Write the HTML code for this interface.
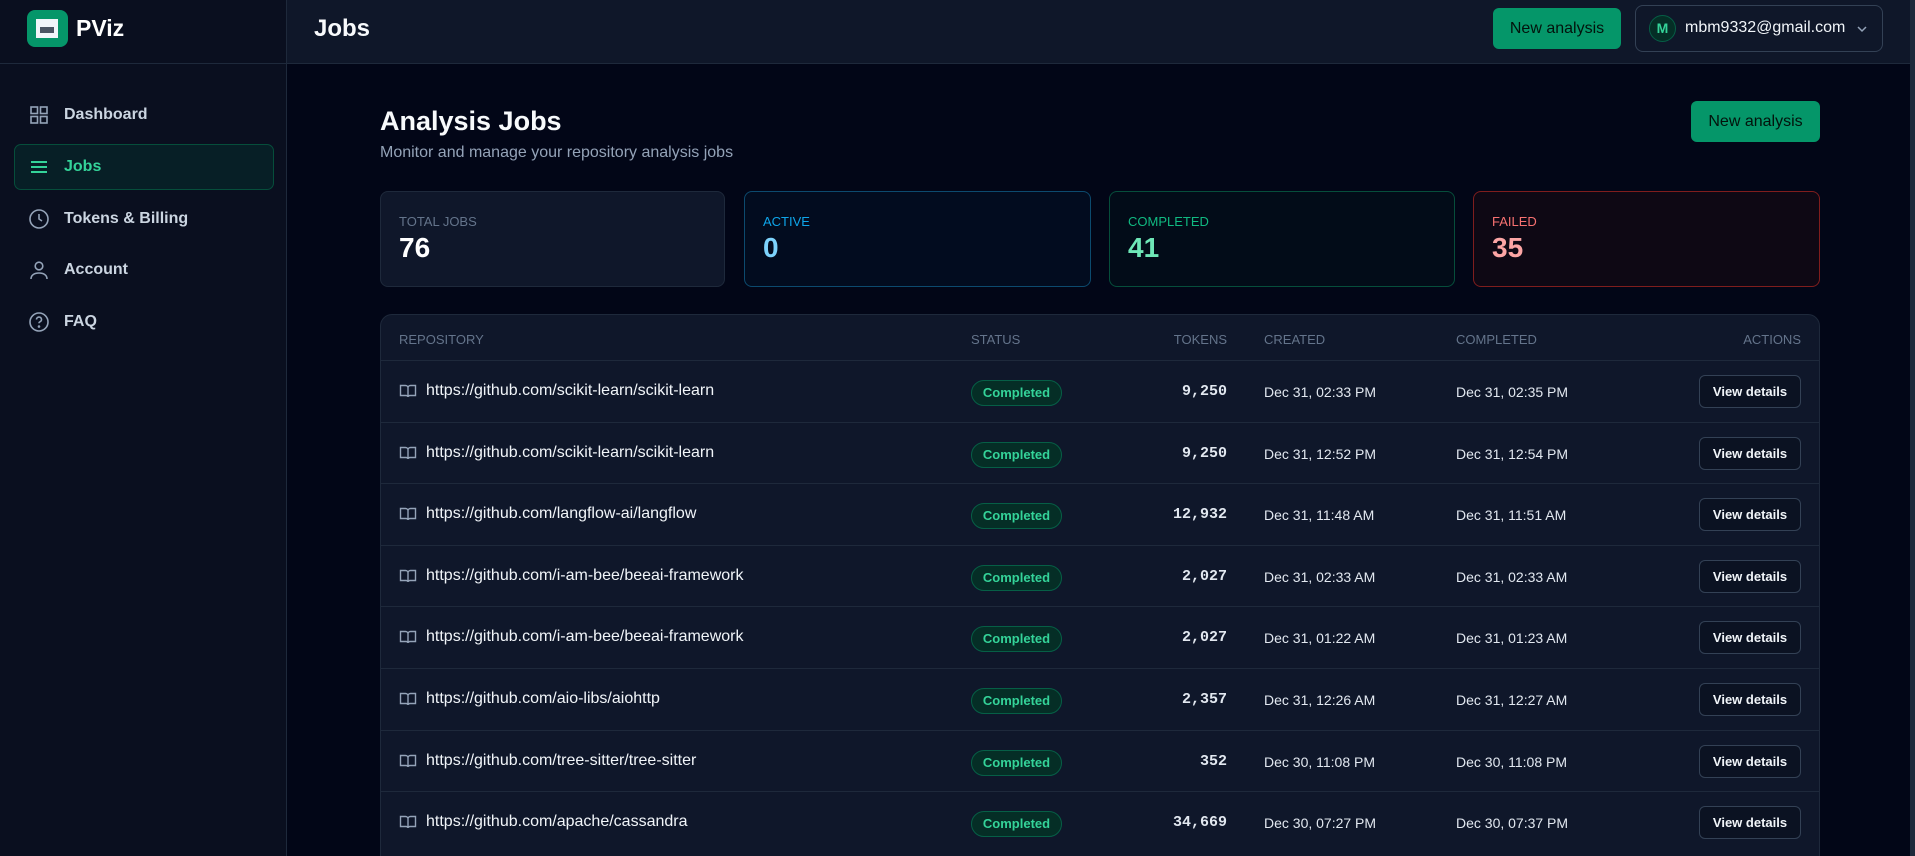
<!DOCTYPE html>
<html style="width:1915px;height:856px;overflow:hidden"><head><meta charset="utf-8"><style>
*{box-sizing:border-box;margin:0;padding:0}
body{width:1915px;height:856px;overflow:hidden;background:#020617;font-family:"Liberation Sans",sans-serif;color:#e2e8f0;position:relative}
.abs{position:absolute}
.side{left:0;top:0;width:287px;height:856px;background:#0a0f1f;border-right:1px solid #1e293b}
.sidehead{left:0;top:0;width:287px;height:64px;border-bottom:1px solid #1e293b}
.head{left:287px;top:0;width:1628px;height:64px;background:#0f1729;border-bottom:1px solid #1e293b}
.nav{position:absolute;left:14px;width:260px;height:46px;display:flex;align-items:center;font-size:16px;font-weight:bold;color:#cbd5e1}
.nav svg{position:absolute;left:14px}
.nav span{position:absolute;left:50px}
.btn{background:#059669;color:#03130c;border-radius:6px;font-size:16px;display:flex;align-items:center;justify-content:center}
.card{position:absolute;top:191px;height:96px;border-radius:8px;border:1px solid}
.card .l{position:absolute;left:18px;top:22px;font-size:13px}
.card .n{position:absolute;left:18px;top:40px;font-size:28px;font-weight:bold}
.table{left:380px;top:314px;width:1440px;height:560px;background:#0f172a;border:1px solid #1e293b;border-radius:12px;overflow:hidden}
.th{position:absolute;top:17px;font-size:13px;color:#64748b}
.row{position:absolute;left:0;width:1438px;height:62px;border-top:1px solid #1e293b}
.row>*{position:absolute}
.url{left:45px;top:21px;font-size:16px;color:#f1f5f9}
.pill{left:590px;top:19px;width:91px;height:26px;border-radius:13px;border:1px solid #065f46;background:#052e26;color:#34d399;font-size:13px;font-weight:bold;text-align:center;line-height:24px}
.tok{right:592px;top:22px;font-family:"Liberation Mono",monospace;font-weight:bold;font-size:15px;color:#e2e8f0}
.d1{left:883px;top:23px;font-size:14px;color:#e2e8f0}
.d2{left:1075px;top:23px;font-size:14px;color:#e2e8f0}
.vd{right:18px;top:14px;width:102px;height:33px;border:1px solid #334155;border-radius:6px;font-size:13px;font-weight:bold;color:#f1f5f9;text-align:center;line-height:31px;background:#0b1222}
.bk{left:18px;top:22px}
</style></head><body>
<div class="abs side"></div>
<div class="abs sidehead"></div>
<div class="abs" style="left:27px;top:10px;width:41px;height:37px;background:#059669;border-radius:8px"><div style="position:absolute;left:9px;top:9px;width:22px;height:19px;background:#f1f5f9"></div><div style="position:absolute;left:13px;top:17px;width:14px;height:6px;background:#4b5563"></div></div>
<div class="abs" style="left:76px;top:15px;font-size:23px;font-weight:bold;color:#fff">PViz</div>
<div class="abs head"></div>
<div class="abs" style="left:314px;top:15px;font-size:24px;font-weight:bold;color:#f8fafc">Jobs</div>
<div class="abs btn" style="left:1493px;top:8px;width:128px;height:41px">New analysis</div>
<div class="abs" style="left:1635px;top:5px;width:248px;height:47px;border:1px solid #334155;border-radius:8px;background:#0f1729">
<div style="position:absolute;left:13px;top:9px;width:27px;height:27px;border-radius:50%;background:#052e26;border:1px solid #065f46;color:#34d399;font-weight:bold;font-size:14px;text-align:center;line-height:25px">M</div>
<div style="position:absolute;left:49px;top:13px;font-size:16px;color:#f1f5f9">mbm9332@gmail.com</div>
<svg style="position:absolute;left:220px;top:18px" width="12" height="10" viewBox="0 0 12 10"><path d="M2 3l4 4 4-4" stroke="#94a3b8" stroke-width="1.5" fill="none"/></svg>
</div>
<div class="abs" style="left:1910px;top:0;width:5px;height:856px;background:#1e293b"></div>

<div class="nav" style="top:92px"><svg width="22" height="22" viewBox="0 0 22 22" fill="none" stroke="#94a3b8" stroke-width="1.6"><rect x="3" y="3" width="6.5" height="6.5"/><rect x="12.5" y="3" width="6.5" height="6.5"/><rect x="3" y="12.5" width="6.5" height="6.5"/><rect x="12.5" y="12.5" width="6.5" height="6.5"/></svg><span>Dashboard</span></div>
<div class="nav" style="top:144px;background:#071f26;border:1px solid #064e3b;border-radius:7px;color:#34d399"><svg style="left:13px" width="22" height="22" viewBox="0 0 22 22" stroke="#34d399" stroke-width="2"><path d="M3 6h16M3 11h16M3 16h16"/></svg><span style="left:49px">Jobs</span></div>
<div class="nav" style="top:196px"><svg width="22" height="22" viewBox="0 0 22 22" fill="none" stroke="#94a3b8" stroke-width="1.6"><circle cx="11" cy="11" r="9"/><path d="M11 6v5l3 2"/></svg><span>Tokens &amp; Billing</span></div>
<div class="nav" style="top:247px"><svg width="22" height="22" viewBox="0 0 22 22" fill="none" stroke="#94a3b8" stroke-width="1.6"><circle cx="11" cy="7" r="3.8"/><path d="M3 20c0-4 3.5-6 8-6s8 2 8 6"/></svg><span>Account</span></div>
<div class="nav" style="top:299px"><svg width="22" height="22" viewBox="0 0 22 22" fill="none" stroke="#94a3b8" stroke-width="1.6"><circle cx="11" cy="11" r="9"/><path d="M8.5 8.5a2.5 2.5 0 1 1 3.5 2.3c-.7.3-1 .8-1 1.5"/><circle cx="11" cy="15.5" r=".5" fill="#94a3b8"/></svg><span>FAQ</span></div>

<div class="abs" style="left:380px;top:106px;font-size:27px;font-weight:bold;color:#f8fafc">Analysis Jobs</div>
<div class="abs" style="left:380px;top:144px;font-size:16px;color:#94a3b8">Monitor and manage your repository analysis jobs</div>
<div class="abs btn" style="left:1691px;top:101px;width:129px;height:41px">New analysis</div>

<div class="card" style="left:380px;width:345px;background:#0f172a;border-color:#1e293b"><div class="l" style="color:#64748b">TOTAL JOBS</div><div class="n" style="color:#fff">76</div></div>
<div class="card" style="left:744px;width:347px;background:#020c1f;border-color:#0c4a6e"><div class="l" style="color:#0ea5e9">ACTIVE</div><div class="n" style="color:#7dd3fc">0</div></div>
<div class="card" style="left:1109px;width:346px;background:#020c18;border-color:#064e3b"><div class="l" style="color:#10b981">COMPLETED</div><div class="n" style="color:#6ee7b7">41</div></div>
<div class="card" style="left:1473px;width:347px;background:#0e0814;border-color:#7f1d1d"><div class="l" style="color:#f87171">FAILED</div><div class="n" style="color:#fca5a5">35</div></div>

<div class="abs table">
<div class="th" style="left:18px">REPOSITORY</div>
<div class="th" style="left:590px">STATUS</div>
<div class="th" style="right:592px">TOKENS</div>
<div class="th" style="left:883px">CREATED</div>
<div class="th" style="left:1075px">COMPLETED</div>
<div class="th" style="right:18px">ACTIONS</div>
<div id="rows"></div>
</div>
<script>
var d=[["scikit-learn/scikit-learn","9,250","Dec 31, 02:33 PM","Dec 31, 02:35 PM"],["scikit-learn/scikit-learn","9,250","Dec 31, 12:52 PM","Dec 31, 12:54 PM"],["langflow-ai/langflow","12,932","Dec 31, 11:48 AM","Dec 31, 11:51 AM"],["i-am-bee/beeai-framework","2,027","Dec 31, 02:33 AM","Dec 31, 02:33 AM"],["i-am-bee/beeai-framework","2,027","Dec 31, 01:22 AM","Dec 31, 01:23 AM"],["aio-libs/aiohttp","2,357","Dec 31, 12:26 AM","Dec 31, 12:27 AM"],["tree-sitter/tree-sitter","352","Dec 30, 11:08 PM","Dec 30, 11:08 PM"],["apache/cassandra","34,669","Dec 30, 07:27 PM","Dec 30, 07:37 PM"]];
var h="";d.forEach(function(r,i){h+='<div class="row" style="top:'+(45+i*61.6)+'px"><svg class="bk" width="18" height="16" viewBox="0 0 18 16" fill="none" stroke="#94a3b8" stroke-width="1.4"><path d="M1.5 2.5h5c1.3 0 2.5 1 2.5 2.3V14c0-.9-1-1.5-2-1.5H1.5z M16.5 2.5h-5C10.2 2.5 9 3.5 9 4.8V14c0-.9 1-1.5 2-1.5h5.5z"/></svg><div class="url">https://github.com/'+r[0]+'</div><div class="pill">Completed</div><div class="tok">'+r[1]+'</div><div class="d1">'+r[2]+'</div><div class="d2">'+r[3]+'</div><div class="vd">View details</div></div>'});
document.getElementById("rows").innerHTML=h;
</script>
</body></html>
